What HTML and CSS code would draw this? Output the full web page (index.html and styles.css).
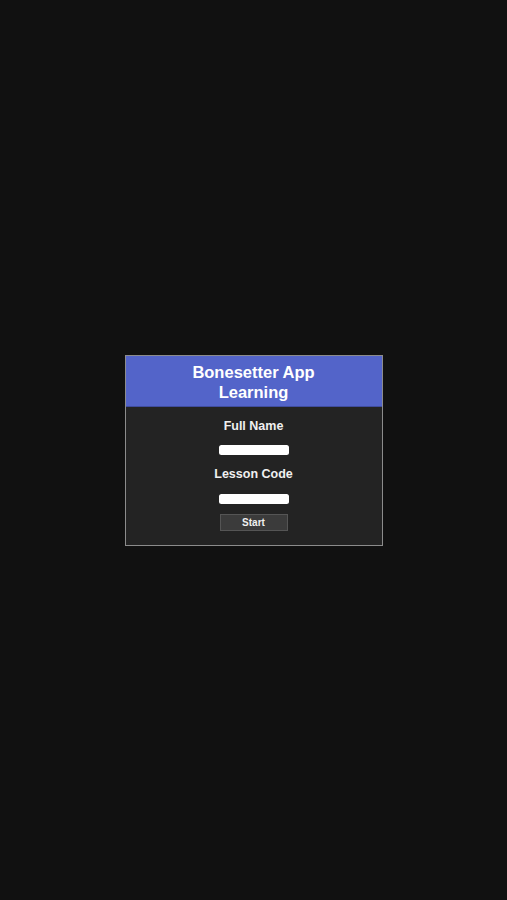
FILE: index.html
```html
<!DOCTYPE html>
<html lang="en">
<head>
<meta charset="utf-8">
<title>Bonesetter App Learning</title>
<link rel="stylesheet" href="styles.css">
</head>
<body>
<main class="page">
  <section class="card">
    <header class="card-header">
      <h1 class="title">Bonesetter App<br>Learning</h1>
    </header>
    <form class="card-body">
      <label class="label label-first" for="name">Full Name</label>
      <input class="field" id="name" type="text">
      <label class="label" for="code">Lesson Code</label>
      <input class="field" id="code" type="text">
      <button class="start" type="button">Start</button>
    </form>
  </section>
</main>
</body>
</html>
```
FILE: styles.css
```css
* { box-sizing: border-box; }
html, body {
  margin: 0;
  padding: 0;
  height: 100%;
  background: #111111;
}
body {
  font-family: "Liberation Sans", Arial, Helvetica, sans-serif;
  color: #f2f2f2;
}
.page {
  height: 900px;
  display: flex;
  align-items: center;
  justify-content: center;
}
.card {
  width: 258px;
  height: 191px;
  border: 1px solid #8c8c8c;
  background: #232323;
  display: flex;
  flex-direction: column;
}
.card-header {
  background: #5364c9;
  height: 51px;
  padding: 6.5px 0 0;
  border-bottom: 1px solid #3f4c9e;
}
.title {
  margin: 0;
  font-size: 16.5px;
  line-height: 20px;
  font-weight: bold;
  text-align: center;
  color: #ffffff;
}
.card-body {
  display: flex;
  flex-direction: column;
  align-items: center;
  margin: 0;
  padding-top: 12px;
}
.label {
  font-size: 12.5px;
  line-height: 15px;
  font-weight: bold;
  color: #f0f0f0;
  margin-top: 12px;
}
.label-first { margin-top: 0; }
.field {
  width: 70px;
  height: 10px;
  margin: 11px 0 0;
  padding: 0;
  border: none;
  border-radius: 2.5px;
  background: #ffffff;
}
.label + .field { margin-top: 11.5px; }
.start {
  width: 68px;
  height: 17px;
  margin-top: 10.5px;
  padding: 0;
  border: 1px solid #555555;
  background: #3b3b3b;
  color: #f0f0f0;
  font-family: "Liberation Sans", Arial, Helvetica, sans-serif;
  font-size: 10px;
  font-weight: bold;
  line-height: 15px;
}
```
